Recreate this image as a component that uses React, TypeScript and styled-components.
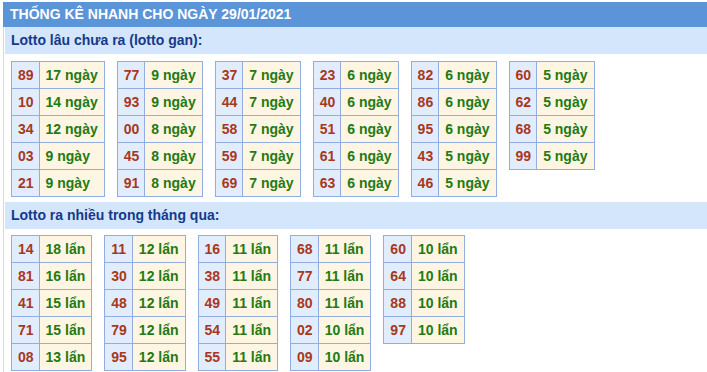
import styled, { createGlobalStyle } from 'styled-components';

const ganData: [string, string][][] = [
  [['89', '17'], ['10', '14'], ['34', '12'], ['03', '9'], ['21', '9']],
  [['77', '9'], ['93', '9'], ['00', '8'], ['45', '8'], ['91', '8']],
  [['37', '7'], ['44', '7'], ['58', '7'], ['59', '7'], ['69', '7']],
  [['23', '6'], ['40', '6'], ['51', '6'], ['61', '6'], ['63', '6']],
  [['82', '6'], ['86', '6'], ['95', '6'], ['43', '5'], ['46', '5']],
  [['60', '5'], ['62', '5'], ['68', '5'], ['99', '5']]
];

const hotData: [string, string][][] = [
  [['14', '18'], ['81', '16'], ['41', '15'], ['71', '15'], ['08', '13']],
  [['11', '12'], ['30', '12'], ['48', '12'], ['79', '12'], ['95', '12']],
  [['16', '11'], ['38', '11'], ['49', '11'], ['54', '11'], ['55', '11']],
  [['68', '11'], ['77', '11'], ['80', '11'], ['02', '10'], ['09', '10']],
  [['60', '10'], ['64', '10'], ['88', '10'], ['97', '10']]
];

const GlobalStyle = createGlobalStyle`
  body {
    margin: 0;
    background: #fff;
    font-family: "Liberation Sans", Arial, sans-serif;
    overflow: hidden;
  }
`;

const Wrapper = styled.div`
  margin: 2px 0 0 3px;
  width: 720px;
`;

const Header = styled.div`
  height: 25px;
  line-height: 25px;
  padding-left: 7px;
  background: #5b94d8;
  color: #fff;
  font-size: 14px;
  font-weight: bold;
`;

const Body = styled.div`
  border-left: 1px solid #d6d9de;
  padding-left: 1px;
`;

const SectionTitle = styled.div`
  height: 27px;
  line-height: 27px;
  padding-left: 6px;
  background: #d3e6fb;
  color: #16398a;
  font-size: 14px;
  font-weight: bold;
`;

const TableRow = styled.div<{ $top: number; $bottom: number }>`
  display: flex;
  align-items: flex-start;
  gap: 12px;
  padding: ${(p) => p.$top}px 0 ${(p) => p.$bottom}px 6px;
`;

const Table = styled.table`
  border-collapse: collapse;
`;

const Cell = styled.td<{ $kind: 'num' | 'count' }>`
  border: 1px solid #92ade0;
  padding: ${(p) => (p.$kind === 'num' ? '0 5px 0 6px' : '0 6px')};
  height: 26px;
  line-height: 16px;
  font-size: 14px;
  font-weight: bold;
  white-space: nowrap;
  background: ${(p) => (p.$kind === 'num' ? '#e1edfd' : '#fff5e3')};
  color: ${(p) => (p.$kind === 'num' ? '#a8381c' : '#237a12')};
`;

const StatTable = ({ rows, unit }: { rows: [string, string][]; unit: string }) => (
  <Table>
    <tbody>
      {rows.map(([num, count]) => (
        <tr key={num}>
          <Cell $kind="num">{num}</Cell>
          <Cell $kind="count">
            {count} {unit}
          </Cell>
        </tr>
      ))}
    </tbody>
  </Table>
);

export default function App() {
  return (
    <Wrapper>
      <GlobalStyle />
      <Header>THỐNG KÊ NHANH CHO NGÀY 29/01/2021</Header>
      <Body>
        <SectionTitle>Lotto lâu chưa ra (lotto gan):</SectionTitle>
        <TableRow $top={7} $bottom={5}>
          {ganData.map((rows, i) => (
            <StatTable key={i} rows={rows} unit="ngày" />
          ))}
        </TableRow>
        <SectionTitle>Lotto ra nhiều trong tháng qua:</SectionTitle>
        <TableRow $top={6} $bottom={4}>
          {hotData.map((rows, i) => (
            <StatTable key={i} rows={rows} unit="lẩn" />
          ))}
        </TableRow>
      </Body>
    </Wrapper>
  );
}
